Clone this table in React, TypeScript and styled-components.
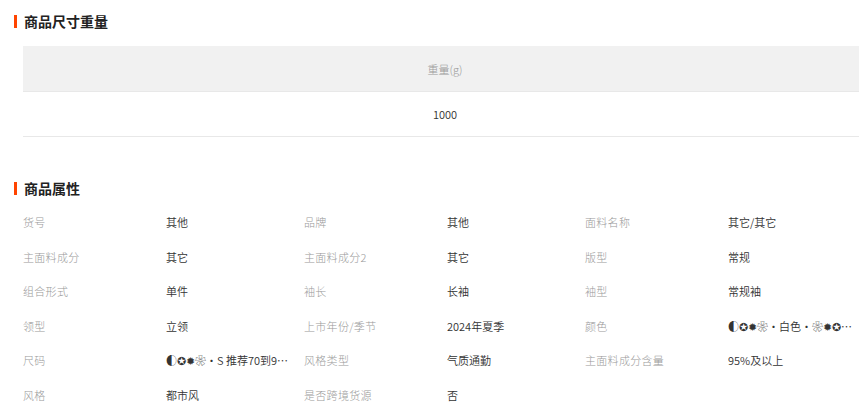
import React, { FC } from 'react';
import styled, { createGlobalStyle } from 'styled-components';

const GlobalStyle = createGlobalStyle`
  html, body {
    margin: 0;
    padding: 0;
    background: #fff;
    overflow: hidden;
  }
  body {
    font-family: "Liberation Sans", "Noto Sans CJK SC", sans-serif;
  }
`;

/** Page wrapper */
const Page = styled.div`
  width: 859px;
  height: 404px;
  overflow: hidden;
  padding: 12px 0 0 14px;
  box-sizing: border-box;
`;

const Section = styled.section<{ $gap?: number }>`
  margin-bottom: ${(p) => p.$gap ?? 0}px;
`;

/** Section title with orange bar */
const Title = styled.h3`
  display: flex;
  align-items: center;
  gap: 7px;
  margin: 0;
  height: 18px;
  font-size: 14px;
  font-weight: bold;
  color: #222;
  font-family: "Noto Sans CJK SC", sans-serif;

  &::before {
    content: '';
    width: 3px;
    height: 13px;
    background: #ff4400;
  }
`;

/** Size/weight table */
const Table = styled.table`
  width: 844px;
  margin: 16px 0 0 9px;
  border-collapse: collapse;
  font-size: 11px;
  font-family: "Noto Sans CJK SC", sans-serif;
`;

const HeadCell = styled.th`
  height: 45px;
  padding: 0;
  background: #f1f1f1;
  color: #999;
  font-weight: 300;
  border-bottom: 1px solid #e8e8e8;
`;

const Cell = styled.td`
  height: 44px;
  padding: 0;
  text-align: center;
  color: #333;
  font-weight: 350;
  border-bottom: 1px solid #e8e8e8;
`;

/** Attribute grid */
const AttrGrid = styled.div`
  display: grid;
  grid-template-columns: repeat(3, 143px 138px);
  grid-auto-rows: 34.5px;
  margin: 8px 0 0 9px;
  font-size: 11px;
  font-family: "Noto Sans CJK SC", sans-serif;
  align-items: center;
`;

const Label = styled.span`
  color: #999;
  font-weight: 300;
  letter-spacing: 0.3px;
`;

const Value = styled.span`
  color: #333;
  font-weight: 350;
  white-space: nowrap;
  overflow: hidden;
  text-overflow: ellipsis;
  padding-right: 14px;
`;

const attrs: [string, string][] = [
  ['货号', '其他'],
  ['品牌', '其他'],
  ['面料名称', '其它/其它'],
  ['主面料成分', '其它'],
  ['主面料成分2', '其它'],
  ['版型', '常规'],
  ['组合形式', '单件'],
  ['袖长', '长袖'],
  ['袖型', '常规袖'],
  ['领型', '立领'],
  ['上市年份/季节', '2024年夏季'],
  ['颜色', '◐✪✹❀•白色•❀✹✪◐黑色'],
  ['尺码', '◐✪✹❀•S 推荐70到90斤'],
  ['风格类型', '气质通勤'],
  ['主面料成分含量', '95%及以上'],
  ['风格', '都市风'],
  ['是否跨境货源', '否'],
];

const App: FC = () => {
  return (
    <Page>
      <GlobalStyle />
      <Section $gap={42}>
        <Title>商品尺寸重量</Title>
        <Table>
          <thead>
            <tr>
              <HeadCell>重量(g)</HeadCell>
            </tr>
          </thead>
          <tbody>
            <tr>
              <Cell>1000</Cell>
            </tr>
          </tbody>
        </Table>
      </Section>
      <Section>
        <Title>商品属性</Title>
        <AttrGrid>
          {attrs.map(([k, v]) => (
            <React.Fragment key={k}>
              <Label>{k}</Label>
              <Value>{v}</Value>
            </React.Fragment>
          ))}
        </AttrGrid>
      </Section>
    </Page>
  );
};

export default App;
